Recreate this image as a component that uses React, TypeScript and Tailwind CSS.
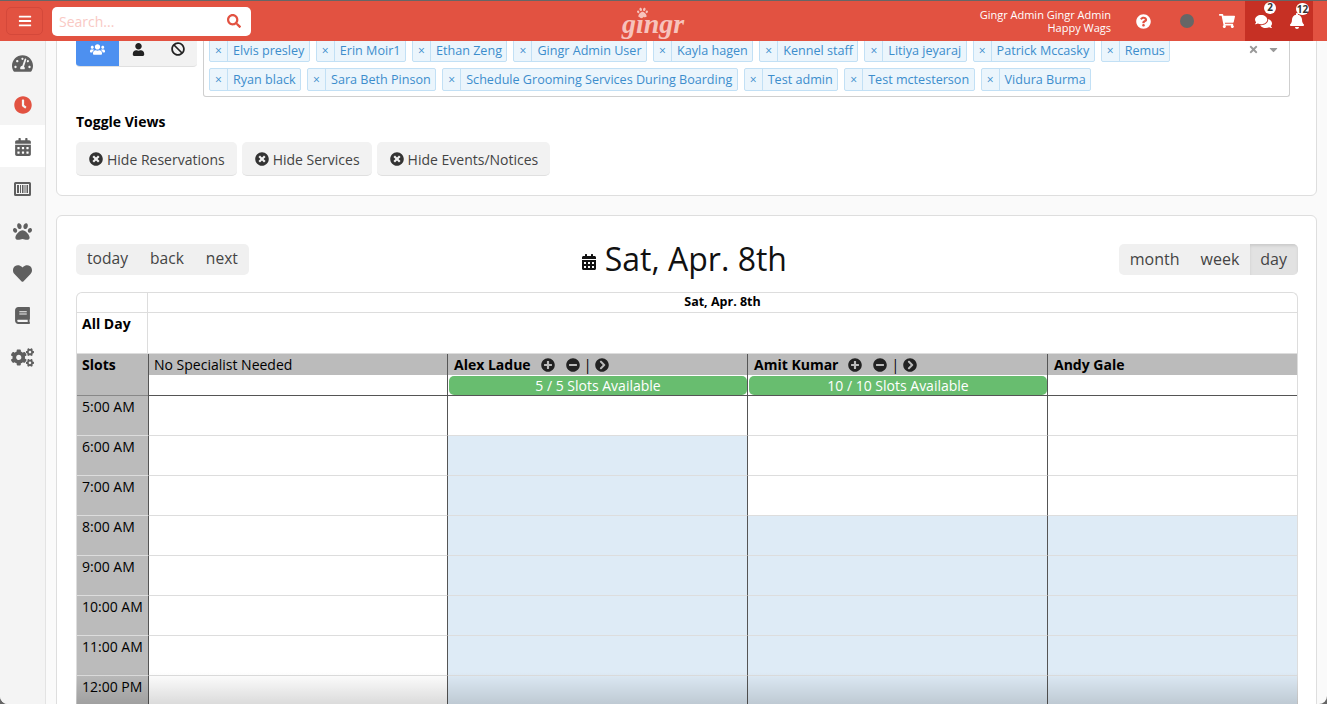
import React from 'react';
import {
  FaBars, FaSearch, FaQuestionCircle, FaShoppingCart, FaComments, FaBell, FaTachometerAlt, FaClock,
  FaCalendarAlt, FaPaw, FaHeart, FaBook, FaCogs, FaUsers, FaUser, FaBan, FaTimesCircle,
  FaPlusCircle, FaMinusCircle, FaChevronCircleRight, FaTimes, FaCaretDown,
} from 'react-icons/fa';

const row1 = ['Elvis presley', 'Erin Moir1', 'Ethan Zeng', 'Gingr Admin User', 'Kayla hagen', 'Kennel staff', 'Litiya jeyaraj', 'Patrick Mccasky', 'Remus'];
const row2 = ['Ryan black', 'Sara Beth Pinson', 'Schedule Grooming Services During Boarding', 'Test admin', 'Test mctesterson', 'Vidura Burma'];
const hours = ['5:00 AM', '6:00 AM', '7:00 AM', '8:00 AM', '9:00 AM', '10:00 AM', '11:00 AM', '12:00 PM'];
// index of the first shaded hour for each specialist column
const shadedFrom = [99, 1, 3, 3];

function Tag({ name }: { name: string }) {
  return (
    <div className="flex h-[23px] items-center rounded-[2px] border border-[#c2e0f5] bg-[#ebf5fc] text-[12.6px] text-[#3c8dcc]">
      <span className="flex h-full w-[18px] items-center justify-center border-r border-[#c2e0f5] text-[12px]">×</span>
      <span className="pl-[5px] pr-[4.4px] pt-[2px]">{name}</span>
    </div>
  );
}

function SideItem({ children, active, color }: { children: React.ReactNode; active?: boolean; color?: string }) {
  return (
    <div className={`flex h-[42px] items-center justify-center pt-[2px] text-[21px] ${active ? 'bg-white' : ''} ${color ?? 'text-[#5f5f5f]'}`}>
      {children}
    </div>
  );
}

function HideButton({ label }: { label: string }) {
  return (
    <div className="flex h-[34px] items-center gap-[4px] rounded-[5px] border-b border-[#e0e0e0] bg-[#f2f2f2] pl-[13px] pr-[12px] pt-[1px] text-[14px] text-[#444]">
      <FaTimesCircle className="text-[14px] text-[#333]" />
      {label}
    </div>
  );
}

function SpecialistHeader({ name }: { name: string }) {
  return (
    <div className="flex h-[21px] items-center border-l border-[#555] bg-[#bbbbbb] pl-[6px] text-[14px] font-bold text-black">
      <span>{name}</span>
      <FaPlusCircle className="ml-[10px] text-[14px] text-[#222]" />
      <FaMinusCircle className="ml-[11px] text-[14px] text-[#222]" />
      <span className="ml-[4px] font-normal">|</span>
      <FaChevronCircleRight className="ml-[4px] text-[14px] text-[#222]" />
    </div>
  );
}

function SlotBadge({ label }: { label: string }) {
  return (
    <div className="h-[21px] border-b border-l border-[#555] bg-white pt-[1px]">
      <div className="ml-[1px] flex h-[19px] items-center justify-center rounded-[5px] bg-[#68bd6f] text-[14px] text-white">{label}</div>
    </div>
  );
}

export default function App() {
  return (
    <div className="h-[704px] w-[1327px] bg-[#666666]">
      <div className="relative flex h-[704px] w-[1327px] flex-col overflow-hidden rounded-b-[8px] bg-[#fafafa] font-['Open_Sans',sans-serif]">
        {/* top bar */}
        <header className="relative z-10 flex h-[41px] shrink-0 items-center border-t border-[#666] bg-[#e25241] pl-[6px] pr-[14px] text-white">
          <div className="flex h-[28px] w-[37px] items-center justify-center rounded-[5px] border border-[#d4483a] text-[14px]">
            <FaBars />
          </div>
          <div className="ml-[9px] flex h-[29px] w-[199px] items-center justify-between rounded-[5px] bg-white pl-[7px] pr-[10px]">
            <span className="text-[14px] text-[#f9c9c4]">Search...</span>
            <FaSearch className="text-[14px] text-[#e25241]" />
          </div>
          <div className="ml-[369px] flex w-[66px] items-center justify-center">
            <span className="relative mt-[5px] font-['Liberation_Serif',serif] text-[28px] font-bold italic leading-none text-[#f7c3bc]">
              gingr
              <FaPaw className="absolute -top-[3px] left-[15px] text-[11px]" />
            </span>
          </div>
          <div className="ml-auto flex h-full items-center">
            <div className="mr-[25px] text-right text-[11px] leading-[13px]">
              <div>Gingr Admin Gingr Admin</div>
              <div>Happy Wags</div>
            </div>
            <FaQuestionCircle className="text-[15px]" />
            <div className="ml-[29px] h-[14px] w-[14px] rounded-full bg-[#666]" />
            <FaShoppingCart className="ml-[25px] text-[16px]" />
            <div className="ml-[10px] flex h-full w-[68px] items-center bg-[#c63024]">
              <div className="relative ml-[10px] text-[17px]">
                <FaComments />
                <span className="absolute -right-[4px] -top-[11px] flex h-[12px] w-[12px] items-center justify-center rounded-full bg-white text-[10px] font-bold text-[#333]">2</span>
              </div>
              <div className="relative ml-[17px] text-[16px]">
                <FaBell />
                <span className="absolute -right-[4px] -top-[10px] flex h-[12px] w-[13px] items-center justify-center rounded-full bg-white text-[10px] font-bold text-[#333]">12</span>
              </div>
            </div>
          </div>
        </header>

        <div className="flex min-h-0 flex-1">
          <aside className="w-[46px] shrink-0 border-r border-[#e3e3e3] bg-[#f4f4f4]">
            <SideItem><FaTachometerAlt /></SideItem>
            <SideItem color="text-[#e25241]"><FaClock className="text-[18px]" /></SideItem>
            <SideItem active><FaCalendarAlt className="text-[18px]" /></SideItem>
            <SideItem>
              <svg width="17" height="14" viewBox="0 0 17 14" fill="#5f5f5f">
                <path fillRule="evenodd" d="M1.5 0h14A1.5 1.5 0 0 1 17 1.5v11a1.5 1.5 0 0 1-1.5 1.5h-14A1.5 1.5 0 0 1 0 12.5v-11A1.5 1.5 0 0 1 1.5 0ZM2 2v10h13V2H2Z" />
                <path d="M3 3h2v8H3zM6 3h1v8H6zM8 3h1.5v8H8zM10.5 3h1v8h-1zM12.5 3H14v8h-1.5z" />
              </svg>
            </SideItem>
            <SideItem><FaPaw className="text-[19px]" /></SideItem>
            <SideItem><FaHeart className="text-[19px]" /></SideItem>
            <SideItem><FaBook className="text-[17px]" /></SideItem>
            <SideItem><FaCogs className="text-[23px]" /></SideItem>
          </aside>

          <main className="flex min-w-0 flex-1 flex-col gap-[19px] pl-[10px] pr-[10px]">
            {/* filters card, scrolled partly under the top bar */}
            <section className="-mt-[20px] h-[175px] shrink-0 rounded-[6px] border border-[#dedede] bg-white pl-[19px] pr-[26px] pt-[17px]">
              <div className="flex gap-[6px]">
                <div className="-mt-[7px] flex h-[35px] w-[121px] shrink-0 self-start overflow-hidden rounded-[4px] border-b border-[#e0e0e0] bg-[#f2f2f2] text-[14px] text-[#222]">
                  <div className="flex w-[43px] items-center justify-center bg-[#4d90f0] text-[15px] text-white"><FaUsers /></div>
                  <div className="flex w-[39px] items-center justify-center"><FaUser className="text-[13px]" /></div>
                  <div className="flex w-[39px] items-center justify-center"><FaBan /></div>
                </div>
                <div className="relative -mt-[10px] h-[68px] flex-1 rounded-b-[3px] border border-t-0 border-[#cfcfcf] px-[5px] pt-[10px]">
                  <div className="flex gap-[6px]">{row1.map(n => <Tag key={n} name={n} />)}</div>
                  <div className="mt-[6px] flex gap-[6px]">{row2.map(n => <Tag key={n} name={n} />)}</div>
                  <div className="absolute right-[9px] top-[14px] flex items-center gap-[8px] text-[#999]">
                    <FaTimes className="text-[11px]" />
                    <FaCaretDown className="text-[13px]" />
                  </div>
                </div>
              </div>
              <div className="mt-[14px] text-[14px] font-bold text-black">Toggle Views</div>
              <div className="mt-[10px] flex gap-[5px]">
                <HideButton label="Hide Reservations" />
                <HideButton label="Hide Services" />
                <HideButton label="Hide Events/Notices" />
              </div>
            </section>

            {/* calendar card */}
            <section className="flex-1 rounded-[6px] border border-[#dedede] bg-white pl-[19px] pr-[18px] pt-[27px]">
              <div className="flex h-[32px] items-center justify-between">
                <div className="flex h-[31px] items-center gap-[22px] rounded-[5px] bg-[#f0f0f0] px-[11px] text-[15.6px] text-[#444]">
                  <span>today</span><span>back</span><span>next</span>
                </div>
                <div className="flex items-center gap-[8px] text-[32px] leading-none text-[#111]">
                  <FaCalendarAlt className="mt-[6px] text-[16px]" />
                  <span>Sat, Apr. 8th</span>
                </div>
                <div className="flex h-[31px] overflow-hidden rounded-[5px] bg-[#f0f0f0] text-[16px] text-[#444]">
                  <span className="flex items-center pl-[11px]">month</span>
                  <span className="flex items-center pl-[21px] pr-[11px]">week</span>
                  <span className="flex items-center bg-[#e2e2e2] pl-[10px] pr-[11px] shadow-[inset_0_2px_3px_rgba(0,0,0,0.1)]">day</span>
                </div>
              </div>

              <div className="mt-[17px] overflow-hidden rounded-t-[6px] border-x border-t border-[#dddddd]">
                <div className="grid grid-cols-[71px_1fr] border-b border-[#dddddd]">
                  <div className="h-[19px] border-r border-[#dddddd]" />
                  <div className="flex h-[19px] items-center justify-center text-[12.5px] font-bold text-black">Sat, Apr. 8th</div>
                  <div className="h-[41px] border-r border-t border-[#dddddd] pl-[5px] text-[14px] font-bold text-black">All Day</div>
                  <div className="h-[41px] border-t border-[#dddddd]" />
                </div>

                <div className="grid grid-cols-[71px_299px_300px_300px_1fr] text-[14px] text-black">
                  <div className="flex h-[21px] items-center bg-[#bbbbbb] pl-[5px] font-bold">Slots</div>
                  <div className="flex h-[21px] items-center border-l border-[#555] bg-[#bbbbbb] pl-[5px]">No Specialist Needed</div>
                  <SpecialistHeader name="Alex Ladue" />
                  <SpecialistHeader name="Amit Kumar" />
                  <div className="flex h-[21px] items-center border-l border-[#555] bg-[#bbbbbb] pl-[6px] font-bold">Andy Gale</div>

                  <div className="h-[21px] border-b border-[#888] bg-[#bbbbbb]" />
                  <div className="h-[21px] border-b border-l border-[#555] bg-white" />
                  <SlotBadge label="5 / 5 Slots Available" />
                  <SlotBadge label="10 / 10 Slots Available" />
                  <div className="h-[21px] border-b border-l border-[#555] bg-white" />

                  {hours.map((h, i) => (
                    <React.Fragment key={h}>
                      <div className="h-[40px] border-b border-[#dddddd] bg-[#bbbbbb] pl-[5px]">{h}</div>
                      {shadedFrom.map((from, c) => (
                        <div key={c} className={`h-[40px] border-b border-l border-b-[#dddddd] border-l-[#555] ${i >= from ? 'bg-[#deebf6]' : 'bg-white'}`} />
                      ))}
                    </React.Fragment>
                  ))}
                </div>
              </div>
            </section>
          </main>
        </div>

        {/* fade over the bottom of the calendar */}
        <div className="pointer-events-none absolute bottom-0 left-[76px] right-[29px] z-20 h-[32px] bg-gradient-to-b from-transparent to-[#00000024]" />
      </div>
    </div>
  );
}
